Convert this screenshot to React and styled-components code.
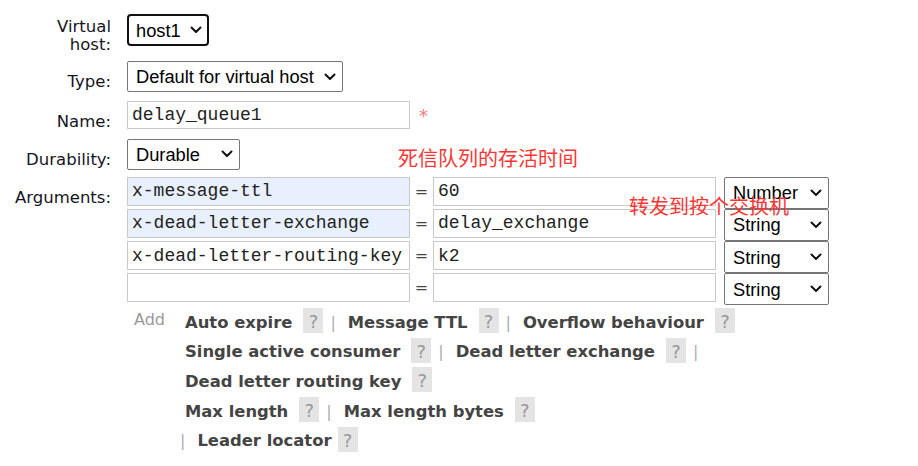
import styled, { createGlobalStyle } from 'styled-components';

const GlobalStyle = createGlobalStyle`
  html, body {
    margin: 0;
    padding: 0;
    background: #fff;
  }
  body {
    font-family: "DejaVu Sans", Verdana, sans-serif;
    font-size: 16px;
    color: #222;
  }
`;

const Page = styled.div`
  position: relative;
  width: 918px;
  height: 466px;
  overflow: hidden;
  padding-top: 14px;
  box-sizing: border-box;
`;

const FieldRow = styled.div`
  display: grid;
  grid-template-columns: 111px auto;
  column-gap: 16px;
  margin-top: ${p => p.$mt || 0}px;
`;

const Label = styled.label`
  text-align: right;
  font-size: 16.5px;
  line-height: ${p => p.$lh || 16.5}px;
  padding-top: ${p => p.$pt ?? 13}px;
  color: #15151f;
`;

const Control = styled.div`
  display: flex;
  align-items: flex-start;
`;

const SelectWrap = styled.span`
  position: relative;
  display: inline-block;
  width: ${p => p.$w}px;
  height: ${p => p.$h || 31}px;
`;

const NativeSelect = styled.select`
  appearance: none;
  -webkit-appearance: none;
  width: 100%;
  height: 100%;
  box-sizing: border-box;
  margin: 0;
  border: ${p => (p.$focused ? '2px solid #101010' : '1px solid #767676')};
  border-radius: ${p => (p.$focused ? 4 : 2)}px;
  padding: 0 0 0 ${p => (p.$focused ? 7 : 8)}px;
  font-family: "Liberation Sans", Arial, sans-serif;
  font-size: 18.3px;
  color: #000;
  background: #fff;
  outline: none;
`;

const Chevron = styled.svg`
  position: absolute;
  right: 7px;
  top: 50%;
  transform: translateY(-50%);
  pointer-events: none;
`;

const TextInput = styled.input`
  box-sizing: border-box;
  width: 283px;
  height: ${p => p.$h || 28}px;
  margin: 0;
  padding: 0 4px;
  border: 1px solid #c9c9c9;
  background: ${p => (p.$filled ? '#e8f0fe' : '#fff')};
  font-family: "Liberation Mono", "Courier New", monospace;
  font-size: 18px;
  color: #222;
  outline: none;
`;

const Mandatory = styled.span`
  color: #f77;
  font-size: 18px;
  margin-left: 9px;
  padding-top: 6px;
  line-height: 18px;
`;

const ArgGrid = styled.div`
  display: grid;
  grid-template-columns: 283px 23px 283px 105px;
  grid-auto-rows: 32.3px;
`;

const Equals = styled.span`
  text-align: center;
  line-height: 29px;
  color: #444;
`;

const TypeCell = styled.div`
  padding-left: 8px;
`;

const HelpArea = styled.div`
  display: grid;
  grid-template-columns: 58px auto;
  margin-left: 127px;
`;

const AddLink = styled.span`
  color: #999;
  padding: 6px 0 0 7px;
  line-height: 16px;
`;

const HelpLine = styled.div`
  display: flex;
  align-items: center;
  height: 29.7px;
  margin-left: ${p => p.$indent || 0}px;
  white-space: nowrap;
`;

const ArgLink = styled.span`
  font-weight: bold;
  font-size: 16.4px;
  color: #444;
  margin-top: 3px;
`;

const HelpMark = styled.span`
  display: inline-flex;
  justify-content: center;
  box-sizing: border-box;
  width: 20px;
  height: 25px;
  padding-top: 3px;
  font-size: 18px;
  line-height: 22px;
  margin-left: ${p => (p.$tight ? 6 : 11)}px;
  background: #e4e4e4;
  color: #999;
`;

const Pipe = styled.span`
  color: #a8aeb6;
  margin: 3px 12px 0 ${p => (p.$first ? 0 : 7)}px;
`;

const Note = styled.span`
  position: absolute;
  left: ${p => p.$x}px;
  top: ${p => p.$y}px;
  z-index: 2;
  color: #ff3535;
  font-family: "Noto Sans CJK SC", sans-serif;
  font-size: 20px;
  line-height: 20px;
  white-space: nowrap;
`;

const ChevronIcon = () => (
  <Chevron width="12" height="8" viewBox="0 0 12 8">
    <polyline points="1.5,1.5 6,6 10.5,1.5" fill="none" stroke="#111" strokeWidth="2" strokeLinecap="round" strokeLinejoin="round" />
  </Chevron>
);

const Select = ({ w, h, focused, value, options }) => (
  <SelectWrap $w={w} $h={h}>
    <NativeSelect $focused={focused} defaultValue={value}>
      {options.map(o => <option key={o}>{o}</option>)}
    </NativeSelect>
    <ChevronIcon />
  </SelectWrap>
);

const Arg = ({ name, tight }) => (
  <>
    <ArgLink>{name}</ArgLink>
    <HelpMark $tight={tight}>?</HelpMark>
  </>
);

const args = [
  { key: 'x-message-ttl', value: '60', type: 'Number', filled: true },
  { key: 'x-dead-letter-exchange', value: 'delay_exchange', type: 'String', filled: true },
  { key: 'x-dead-letter-routing-key', value: 'k2', type: 'String' },
  { key: '', value: '', type: 'String' },
];

export default function App() {
  return (
    <Page>
      <GlobalStyle />
      <FieldRow>
        <Label $pt={4} $lh={17.5}>Virtual<br />host:</Label>
        <Control>
          <Select w={82} h={32} focused value="host1" options={['/', 'host1']} />
        </Control>
      </FieldRow>
      <FieldRow $mt={8}>
        <Label>Type:</Label>
        <Control>
          <Select w={216} value="Default for virtual host" options={['Default for virtual host', 'Classic', 'Quorum', 'Stream']} />
        </Control>
      </FieldRow>
      <FieldRow $mt={9}>
        <Label>Name:</Label>
        <Control>
          <TextInput defaultValue="delay_queue1" />
          <Mandatory>*</Mandatory>
        </Control>
      </FieldRow>
      <FieldRow $mt={8}>
        <Label>Durability:</Label>
        <Control>
          <Select w={113} value="Durable" options={['Durable', 'Transient']} />
        </Control>
      </FieldRow>
      <FieldRow $mt={7}>
        <Label>Arguments:</Label>
        <ArgGrid>
          {args.map((a, i) => [
            <TextInput key={'k' + i} $h={29} $filled={a.filled} defaultValue={a.key} />,
            <Equals key={'e' + i}>=</Equals>,
            <TextInput key={'v' + i} $h={29} defaultValue={a.value} />,
            <TypeCell key={'t' + i}>
              <Select w={105} h={32} value={a.type} options={['String', 'Number', 'Boolean', 'List']} />
            </TypeCell>,
          ])}
        </ArgGrid>
      </FieldRow>
      <HelpArea>
        <AddLink>Add</AddLink>
        <div>
          <HelpLine>
            <Arg name="Auto expire" />
            <Pipe>|</Pipe>
            <Arg name="Message TTL" />
            <Pipe>|</Pipe>
            <Arg name="Overflow behaviour" />
          </HelpLine>
          <HelpLine>
            <Arg name="Single active consumer" />
            <Pipe>|</Pipe>
            <Arg name="Dead letter exchange" />
            <Pipe>|</Pipe>
          </HelpLine>
          <HelpLine>
            <Arg name="Dead letter routing key" />
          </HelpLine>
          <HelpLine>
            <Arg name="Max length" />
            <Pipe>|</Pipe>
            <Arg name="Max length bytes" />
          </HelpLine>
          <HelpLine $indent={-5}>
            <Pipe $first>|</Pipe>
            <Arg name="Leader locator" tight />
          </HelpLine>
        </div>
      </HelpArea>
      <Note $x={398} $y={148}>死信队列的存活时间</Note>
      <Note $x={629} $y={196}>转发到按个交换机</Note>
    </Page>
  );
}
